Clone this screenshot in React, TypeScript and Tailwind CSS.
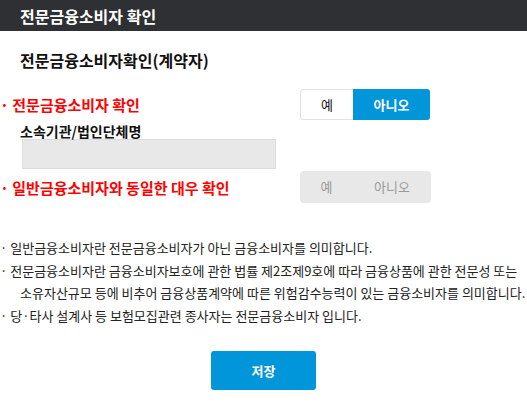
import React from "react";

const font = { fontFamily: '"Noto Sans CJK KR", "Noto Sans", sans-serif' };

export default function App() {
  return (
    <div className="w-[527px] h-[405px] bg-white overflow-hidden" style={font}>
      <div className="h-[31px] bg-[#2e3033] flex items-center px-5">
        <span className="text-[16px] font-bold text-white leading-none">전문금융소비자 확인</span>
      </div>

      <div className="pl-5 mt-[17px] text-[16px] leading-6 font-bold text-[#111]">
        전문금융소비자확인(계약자)
      </div>

      <div className="mt-[17px] flex items-center h-[31px]">
        <div className="w-[300px] text-[15px] font-bold text-[#ff0000] leading-none">· 전문금융소비자 확인</div>
        <div className="flex h-[31px] w-[130px] rounded-[3px] overflow-hidden">
          <button className="w-[53px] h-full bg-white border border-[#e3e3e3] border-r-0 rounded-l-[3px] text-[13px] text-[#111]">
            예
          </button>
          <button className="flex-1 h-full bg-[#0096d9] text-white text-[13px] font-bold">아니오</button>
        </div>
      </div>

      <div className="pl-5 mt-[3px] text-[14px] font-bold text-[#111] leading-4">소속기관/법인단체명</div>
      <div className="ml-[22px] mt-0 w-[254px] h-[30px] bg-[#e8e8e8] border border-[#dcdcdc]" />

      <div className="mt-[2px] flex items-center h-[32px]">
        <div className="w-[300px] text-[15px] font-bold text-[#ff0000] leading-none">· 일반금융소비자와 동일한 대우 확인</div>
        <div className="flex h-[32px] w-[131px] rounded-[4px] bg-[#e8e8e8] text-[13px] text-[#9a9a9a]">
          <div className="w-[53px] flex items-center justify-center">예</div>
          <div className="flex-1 flex items-center justify-center">아니오</div>
        </div>
      </div>

      <div className="mt-[34px] text-[13px] leading-[22.5px] text-[#222]">
        <div className="pl-5 -indent-5 whitespace-nowrap">· 일반금융소비자란 전문금융소비자가 아닌 금융소비자를 의미합니다.</div>
        <div className="pl-5 -indent-5 whitespace-nowrap">
          · 전문금융소비자란 금융소비자보호에 관한 법률 제2조제9호에 따라 금융상품에 관한 전문성 또는
          <br />
          소유자산규모 등에 비추어 금융상품계약에 따른 위험감수능력이 있는 금융소비자를 의미합니다.
        </div>
        <div className="pl-5 -indent-5 whitespace-nowrap">· 당·타사 설계사 등 보험모집관련 종사자는 전문금융소비자 입니다.</div>
      </div>

      <div className="mt-[24px] flex justify-center">
        <button className="w-[105px] h-[39px] rounded-[3px] bg-[#0096d9] text-white text-[13px] font-bold">저장</button>
      </div>
    </div>
  );
}
